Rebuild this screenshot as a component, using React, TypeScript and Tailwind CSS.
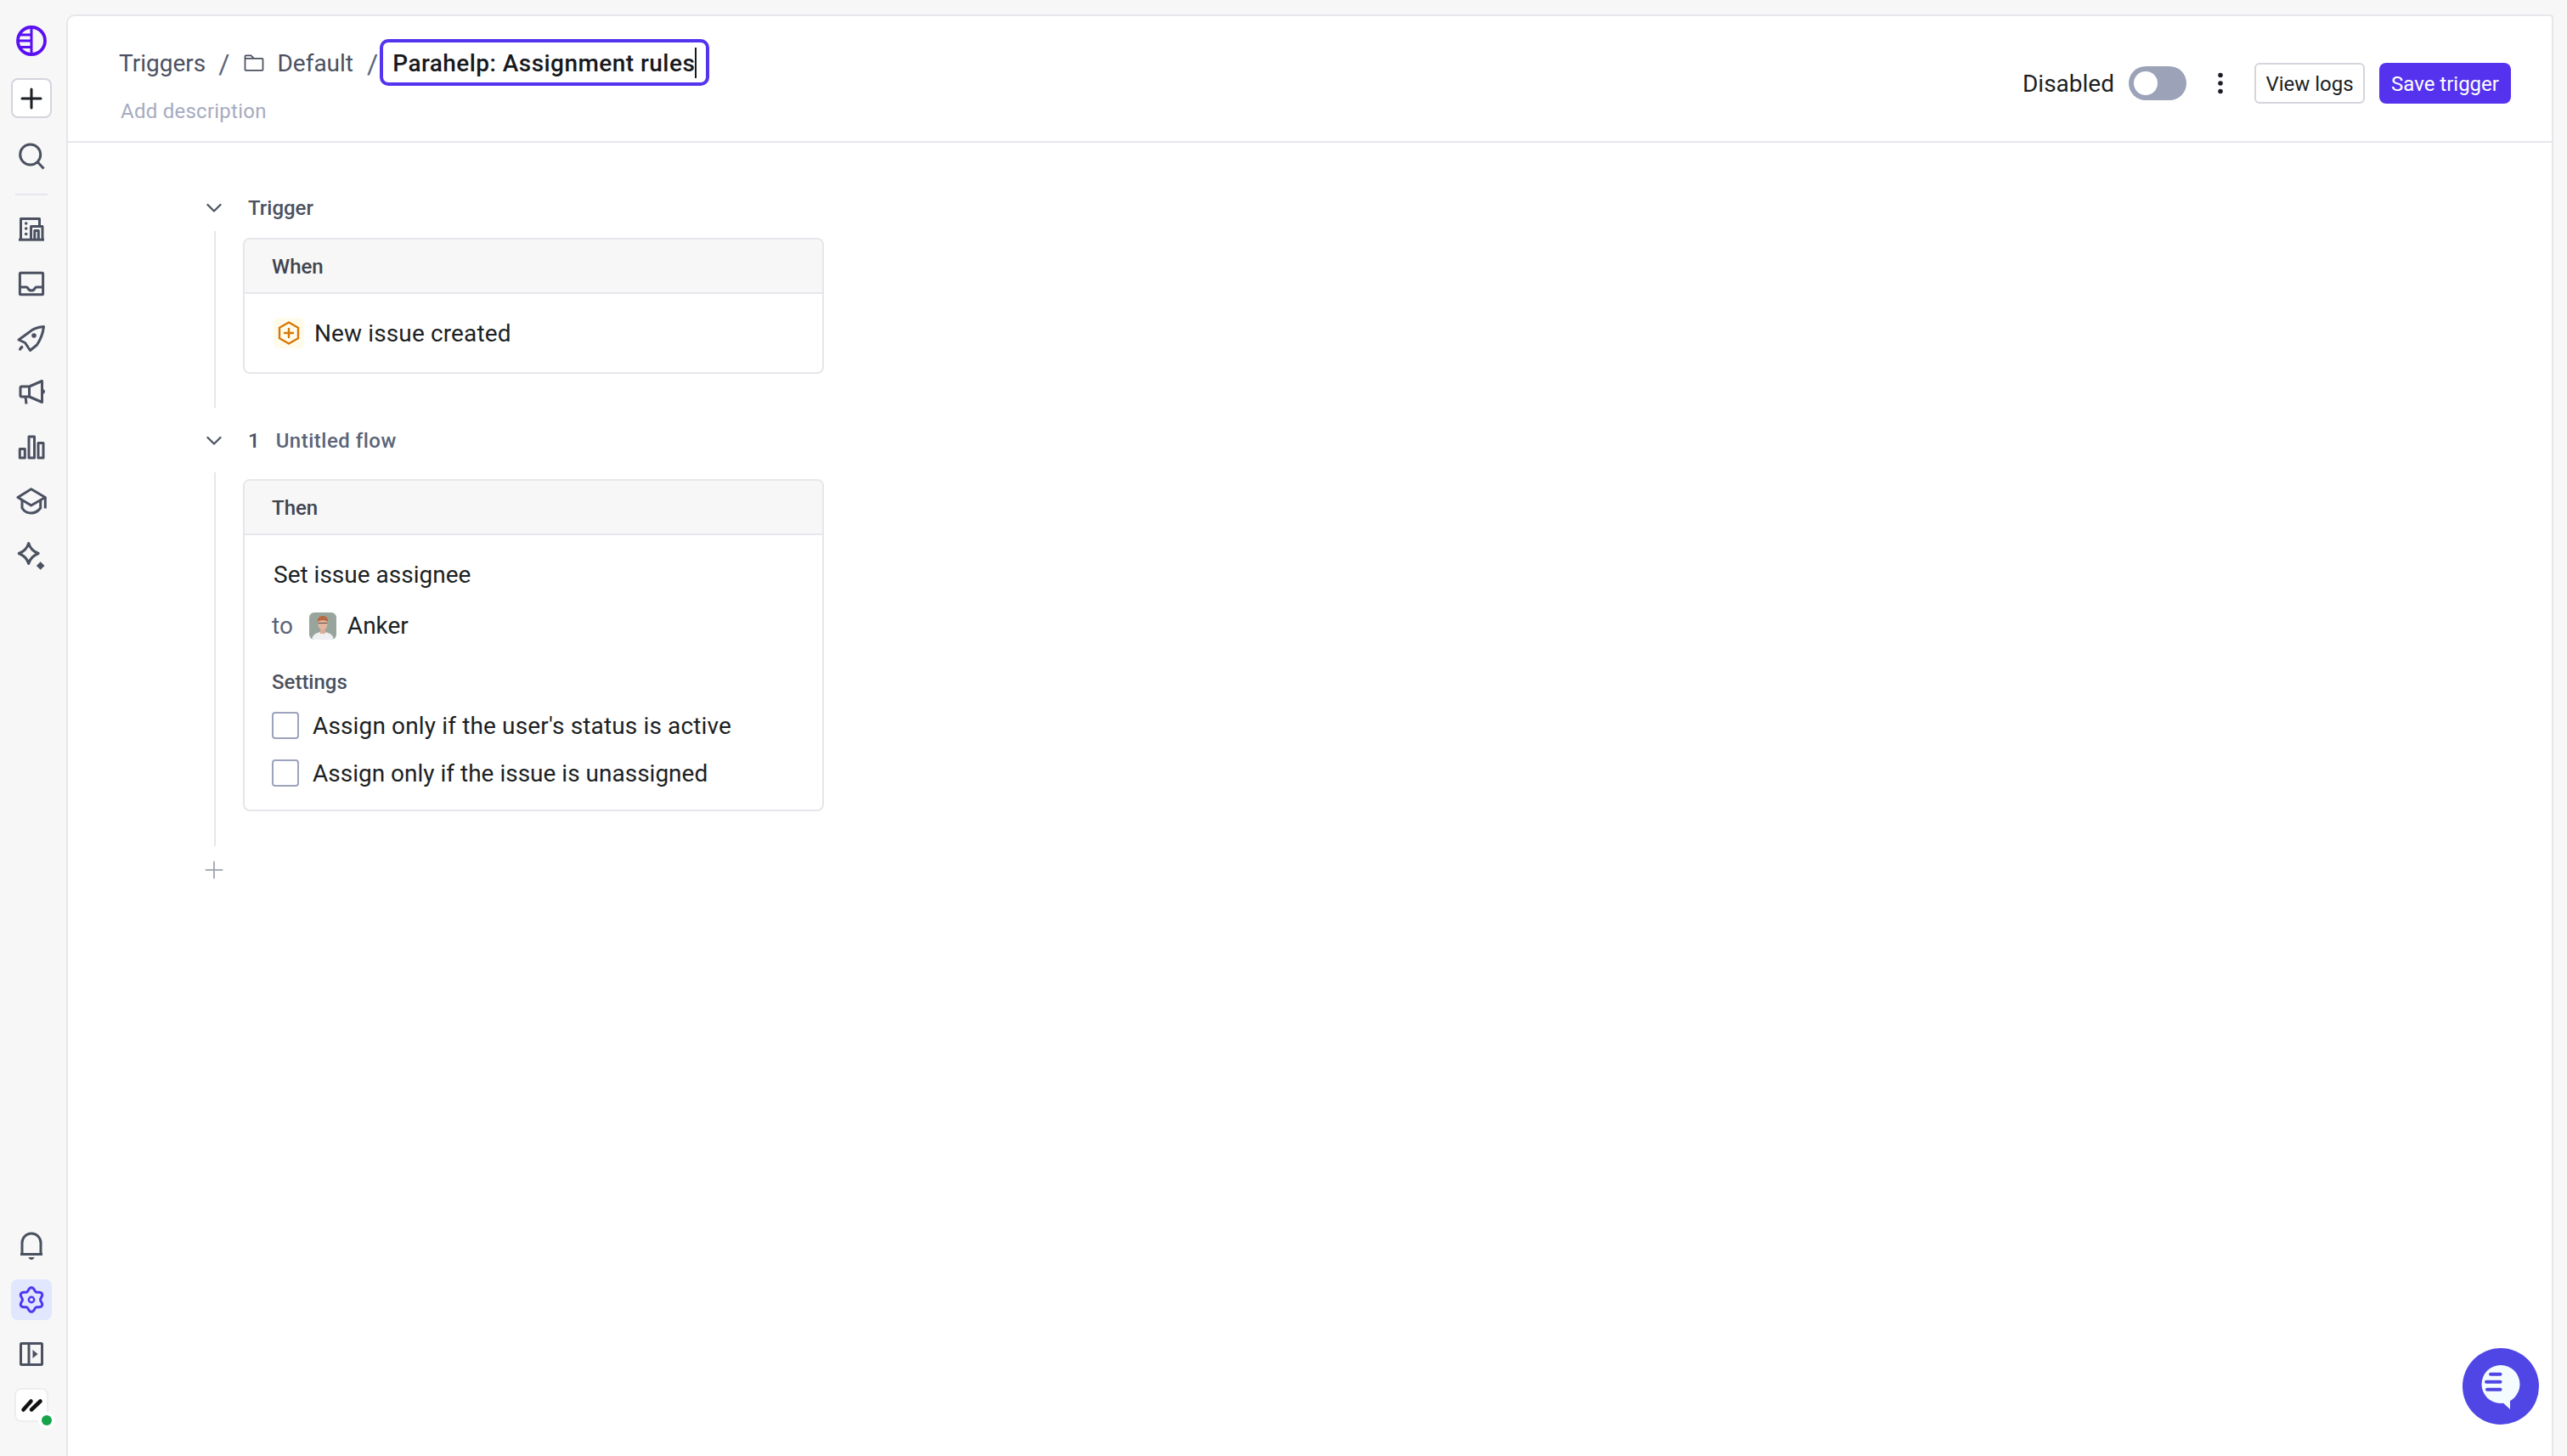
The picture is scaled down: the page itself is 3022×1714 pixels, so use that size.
import type { ReactNode } from "react";
import { PiCaretDownBold, PiFolder, PiPlus, PiPlusBold } from "react-icons/pi";

const gearPath = Array.from({ length: 72 }, (_, i) => {
  const a = (i / 72) * Math.PI * 2;
  const r = 12.4 + 1.9 * Math.cos(6 * a);
  return `${i === 0 ? "M" : "L"}${(18 + r * Math.sin(a)).toFixed(2)} ${(18 - r * Math.cos(a)).toFixed(2)}`;
}).join("") + "Z";

// sidebar icons share this frame, 36 box with the grey stroke
function Glyph({ children, stroke = "#4b5160" }: { children: ReactNode; stroke?: string }) {
  return (
    <svg viewBox="0 0 36 36" className="size-[36px]" fill="none" stroke={stroke} strokeWidth="3" strokeLinejoin="round">
      {children}
    </svg>
  );
}

function Logo() {
  return (
    <svg viewBox="0 0 36 36" className="size-[36px]" fill="none" stroke="#5a10f2">
      <circle cx="18" cy="18" r="16" strokeWidth="3.800" />
      <path d="M18 2v32" strokeWidth="3" />
      <path d="M3 11h15M2 18h16M3 25.500h15" strokeWidth="3" />
    </svg>
  );
}

function IssueIcon() {
  return (
    <span className="flex size-[36px] items-center justify-center rounded-[6px] bg-[#fffbeb]">
      <svg viewBox="0 0 28 28" className="size-[28px]" fill="none" stroke="#d97706" strokeWidth="2.400" strokeLinejoin="round">
        <path d="M14 1.500 25 7.700v12.600L14 26.500 3 20.300V7.700z" />
        <path d="M14 9v10M9 14h10" strokeLinecap="round" />
      </svg>
    </span>
  );
}

function Avatar() {
  return (
    <svg viewBox="0 0 32 32" className="size-[32px] shrink-0 rounded-[6px]">
      <rect width="32" height="32" fill="#98a59c" />
      <path d="M3 32c1-7 7-9 13-9s12 2 13 9z" fill="#eef0f2" />
      <rect x="13" y="18" width="6" height="7" fill="#dcae98" />
      <ellipse cx="16" cy="13.500" rx="5.600" ry="7" fill="#e3b6a0" />
      <path d="M10 11c-.5-5 2.500-7 6-7s6.500 2 6 7c-3-2.500-8.500-2.500-12 0z" fill="#b9693f" />
      <path d="M10.500 12.500h11" stroke="#5c4a42" strokeWidth="1" />
    </svg>
  );
}

function ChatBubble() {
  return (
    <div className="absolute bottom-[37px] right-[33px] size-[90px] rounded-full bg-[#4f46e5]">
      <svg viewBox="0 0 90 90" className="size-[90px]">
        <circle cx="45" cy="42.500" r="22.500" fill="#f5fcff" />
        <path d="M56 58v14L44 61z" fill="#f5fcff" />
        <path d="M33 30.700h11.500M28 39.700h16.500M29 48.700h15.500" stroke="#4f46e5" strokeWidth="4" strokeLinecap="round" />
      </svg>
    </div>
  );
}

function NavIcon({ children }: { children: ReactNode }) {
  return <div className="flex h-[64px] w-full items-center justify-center">{children}</div>;
}

function Sidebar() {
  return (
    <aside className="flex h-full w-[78px] shrink-0 flex-col items-center pr-[4px]">
      <div className="mt-[30px] flex h-[36px] items-center justify-center">
        <Logo />
      </div>
      <button className="mt-[26px] flex h-[47px] w-[48px] items-center justify-center rounded-[8px] border-2 border-[#d4d5dd] bg-white text-[#1c1f24]">
        <PiPlusBold className="size-[32px]" />
      </button>
      <div className="mt-[21px] flex h-[48px] items-center justify-center">
        <Glyph>
          <circle cx="16.700" cy="16" r="12" />
          <path d="M25.500 25l7 7.500" />
        </Glyph>
      </div>
      <div className="mt-[20px] h-[2px] w-[38px] bg-[#e6e6ec]" />
      <div className="mt-[8px] flex w-full flex-col">
        <NavIcon>
          <Glyph>
            <path d="M5.500 30V5.500h22V14" />
            <path d="M17.500 30V14.500H31V30" />
            <path d="M21.800 30V19.500h4.500V30" />
            <path d="M3 30.200h30" />
            <circle cx="11.700" cy="11" r="1.800" fill="#4b5160" stroke="none" />
            <circle cx="11.700" cy="17" r="1.800" fill="#4b5160" stroke="none" />
            <circle cx="11.700" cy="23.500" r="1.800" fill="#4b5160" stroke="none" />
          </Glyph>
        </NavIcon>
        <NavIcon>
          <Glyph>
            <rect x="4.400" y="5.300" width="27.200" height="25.400" rx="1" />
            <path d="M4 22h8c1 0 1.500.5 2 1.500.8 1.700 2.200 2.500 4 2.500s3.200-.8 4-2.500c.5-1 1-1.500 2-1.500h8" />
          </Glyph>
        </NavIcon>
        <NavIcon>
          <Glyph>
            <path d="M32.500 4.500c-7 .5-13 2.500-17 6.500L3 20l7.500 3.500L16.500 32.500l8-6.500c4-6 7-13 8-21.500z" />
            <circle cx="21" cy="15" r="2.800" fill="#4b5160" stroke="none" />
            <path d="M4.500 32.500c0-2 1-3.500 3.500-4.500" />
          </Glyph>
        </NavIcon>
        <NavIcon>
          <Glyph>
            <path d="M30.500 4.500 15.500 11h-9A1.500 1.500 0 0 0 5 12.500v9A1.500 1.500 0 0 0 6.500 23h9l15 6.500z" />
            <path d="M15.500 11v12M11 23l1 8.500" />
            <path d="M31 14c1.500.6 2.500 1.600 2.500 3s-1 2.400-2.500 3z" fill="#4b5160" strokeWidth="1" />
          </Glyph>
        </NavIcon>
        <NavIcon>
          <Glyph>
            <rect x="4.300" y="20.500" width="6" height="10.500" />
            <rect x="15" y="6" width="6.500" height="25" />
            <rect x="26" y="13.500" width="6" height="17.500" />
          </Glyph>
        </NavIcon>
        <NavIcon>
          <Glyph>
            <path d="M17.700 3.700 2 13.500 17.700 23l16.500-9.500z" />
            <path d="M7 17v9c2.500 4 6.500 6 10.700 6s8-2 11-6v-9" />
            <path d="M34.300 13.500v13" />
          </Glyph>
        </NavIcon>
        <NavIcon>
          <Glyph>
            <path d="M14.700 3.500c1.500 5.500 5 9.500 11.500 12-6.500 2.500-10 6.500-11.500 12-1.500-5.500-5-9.500-11.500-12 6.500-2.500 10-6.500 11.500-12z" />
            <path d="M28.700 25.500l4.500 4.500-4.500 4.500-4.500-4.500z" fill="#4b5160" strokeWidth="0.5" />
          </Glyph>
        </NavIcon>
      </div>

      <div className="mt-auto flex w-full flex-col items-center pb-[40px]">
        <NavIcon>
          <Glyph>
            <path d="M7 28V15a11 11 0 0 1 22 0v13" />
            <path d="M5 28.500h26" />
            <path d="M14.500 32h7c-.5 2-2 3-3.500 3s-3-1-3.500-3z" fill="#4b5160" stroke="none" />
          </Glyph>
        </NavIcon>
        <div className="mt-[8px] flex size-[48px] items-center justify-center rounded-[8px] bg-[#e0e7ff]">
          <Glyph stroke="#4f39f0">
            <path d={gearPath} />
            <circle cx="18" cy="18" r="3.200" strokeWidth="2.400" />
          </Glyph>
        </div>
        <div className="mt-[16px] flex h-[48px] items-center justify-center">
          <svg viewBox="0 0 28 28" className="size-[28px]" fill="none">
            <rect x="1.500" y="1.500" width="25" height="25" rx="1" stroke="#4b5160" strokeWidth="3" />
            <path d="M11 2v24" stroke="#4b5160" strokeWidth="3" />
            <path d="M15.500 9l6 5-6 5z" fill="#4b5160" />
          </svg>
        </div>
        <div className="relative mt-[16px] flex size-[40px] items-center justify-center rounded-[8px] border-2 border-[#eeeef1] bg-white">
          <svg viewBox="0 0 36 36" className="size-[36px]" fill="none" stroke="#111" strokeWidth="4.500" strokeLinecap="round">
            <path d="M8.500 23.500l9-10M18 23.500l10.500-10" />
          </svg>
          <span className="absolute -bottom-[10px] -right-[10px] flex size-[20px] items-center justify-center rounded-full bg-white">
            <span className="size-[12px] rounded-full bg-[#16a34a]" />
          </span>
        </div>
      </div>
    </aside>
  );
}

function Header() {
  return (
    <header className="flex h-[149px] shrink-0 justify-between border-b-2 border-[#e6e6ec]">
      <div className="pl-[60px] pt-[27px]">
        <div className="flex h-[55px] items-center text-[28px] text-[#4b5160]">
          <span className="pt-[2px]">Triggers</span>
          <span className="ml-[15px] pt-[2px] text-[32px] text-[#5b6478]">/</span>
          <PiFolder className="ml-[15px] size-[28px]" />
          <span className="ml-[13px] pt-[2px]">Default</span>
          <span className="ml-[16px] pt-[2px] text-[32px] text-[#5b6478]">/</span>
          <div className="ml-[2px] flex h-[55px] w-[388px] items-center rounded-[10px] border-[4px] border-[#5534f0] pl-[11px] font-medium tracking-[0.45px] text-[#17191d]">
            <span className="pt-[2px]">Parahelp: Assignment rules</span>
            <span className="h-[36px] w-[2px] bg-[#17191d]" />
          </div>
        </div>
        <div className="ml-[2px] mt-[14px] h-[32px] text-[24px] leading-[32px] tracking-[0.25px] text-[#a6abbf]">Add description</div>
      </div>
      <div className="flex items-start pr-[48px] pt-[55px]">
        <div className="flex h-[48px] items-center">
          <span className="pt-[1px] text-[28px] text-[#1c1f24]">Disabled</span>
          <div className="ml-[17px] flex h-[40px] w-[68px] items-center rounded-full bg-[#9ca3b8] pl-[6px]">
            <span className="size-[28px] rounded-full bg-white" />
          </div>
          <svg viewBox="0 0 8 28" className="ml-[36px] h-[28px] w-[8px]" fill="#1c1f24">
            <circle cx="4" cy="4.500" r="2.800" />
            <circle cx="4" cy="14" r="2.800" />
            <circle cx="4" cy="23.500" r="2.800" />
          </svg>
          <button className="ml-[36px] h-[48px] w-[130px] rounded-[6px] border-2 border-[#d4d5dd] pt-[1px] text-[24px] text-[#1c1f24]">View logs</button>
          <button className="ml-[17px] h-[48px] w-[155px] rounded-[8px] bg-[#5533ee] pt-[1px] text-[24px] text-white">Save trigger</button>
        </div>
      </div>
    </header>
  );
}

function SectionRow({ children, className }: { children: ReactNode; className?: string }) {
  return (
    <div className={`flex h-[40px] items-center ${className ?? ""}`}>
      <span className="flex w-[32px] justify-center text-[#4b5160]">
        <PiCaretDownBold className="size-[24px]" />
      </span>
      {children}
    </div>
  );
}

function Card({ title, children }: { title: string; children: ReactNode }) {
  return (
    <div className="w-[684px] overflow-hidden rounded-[8px] border-2 border-[#e6e6ec]">
      <div className="flex h-[64px] items-center border-b-2 border-[#e6e6ec] bg-[#f7f7f8] px-[32px] pt-[2px] text-[24px] font-medium text-[#40444f]">{title}</div>
      {children}
    </div>
  );
}

function CheckRow({ label, className }: { label: string; className: string }) {
  return (
    <div className={`flex h-[32px] items-center text-[28px] text-[#1c1f24] ${className}`}>
      <span className="size-[32px] shrink-0 rounded-[4px] border-2 border-[#9ca3bc] bg-white" />
      <span className="ml-[16px] pt-[1px]">{label}</span>
    </div>
  );
}

function Flow() {
  return (
    <div className="pl-[156px] pt-[56px]">
      <SectionRow>
        <span className="ml-[24px] pt-[2px] text-[24px] font-medium text-[#4b5160]">Trigger</span>
      </SectionRow>
      <div className="ml-[16px] mt-[8px] border-l-2 border-[#e6e6ec] pb-[40px] pl-[32px] pt-[8px]">
        <Card title="When">
          <div className="flex h-[92px] items-center pl-[34px] text-[28px] text-[#1c1f24]">
            <IssueIcon />
            <span className="ml-[12px] pt-[2px] tracking-[0.12px]">New issue created</span>
          </div>
        </Card>
      </div>

      <SectionRow className="mt-[18px]">
        <span className="ml-[24px] pt-[2px] text-[24px] font-medium text-[#4b5160]">1</span>
        <span className="ml-[19px] pt-[2px] text-[24px] font-medium tracking-[0.5px] text-[#5b6478]">Untitled flow</span>
      </SectionRow>
      <div className="ml-[16px] mt-[18px] border-l-2 border-[#e6e6ec] pb-[41px] pl-[32px] pt-[8px]">
        <Card title="Then">
          <div className="px-[32px] pb-[27px] pt-[27px]">
            <div className="h-[40px] pl-[2px] text-[28px] leading-[40px] text-[#1c1f24]">Set issue assignee</div>
            <div className="mt-[20px] flex h-[40px] items-center text-[28px]">
              <span className="text-[#5b6478]">to</span>
              <span className="ml-[19px]">
                <Avatar />
              </span>
              <span className="ml-[13px] text-[#1c1f24]">Anker</span>
            </div>
            <div className="mt-[30px] h-[32px] text-[24px] font-medium leading-[32px] text-[#4b5160]">Settings</div>
            <CheckRow className="mt-[19px] tracking-[0.14px]" label="Assign only if the user's status is active" />
            <CheckRow className="mt-[24px]" label="Assign only if the issue is unassigned" />
          </div>
        </Card>
      </div>

      <div className="mt-[12px] flex h-[32px] w-[32px] items-center justify-center text-[#9ca3af]">
        <PiPlus className="size-[28px]" />
      </div>
    </div>
  );
}

export default function App() {
  return (
    <div className="relative flex h-[1714px] w-[3022px] overflow-hidden bg-[#f7f7f8] [font-family:Roboto,sans-serif]">
      <Sidebar />
      <main className="mr-[16px] mt-[17px] flex flex-1 flex-col rounded-tl-[10px] rounded-tr-[4px] border-x-2 border-t-2 border-[#e6e6ec] bg-white">
        <Header />
        <Flow />
      </main>
      <ChatBubble />
    </div>
  );
}
